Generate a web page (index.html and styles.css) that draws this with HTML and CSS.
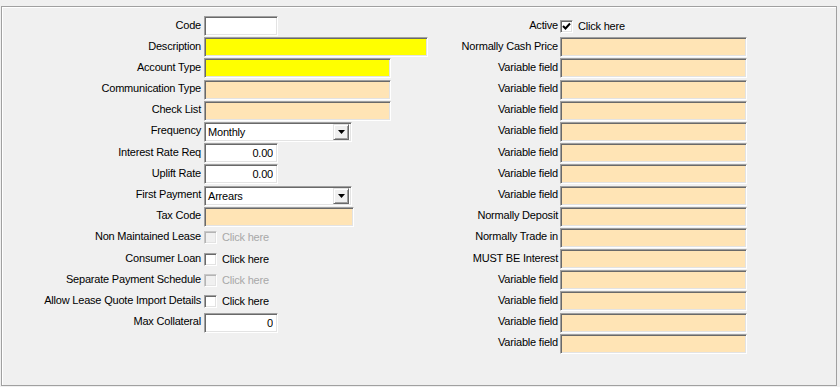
FILE: index.html
```html
<!DOCTYPE html>
<html lang="en">
<head>
    <meta charset="UTF-8">
    <title>Account Type</title>

    <link rel="stylesheet" href="styles.css">
</head>
<body>

<div class="panel">
    <!-- left column -->
    <div class="form form--left">
        <span class="form__label">Code</span>
        <input class="field field--short" type="text">

        <span class="form__label">Description</span>
        <input class="field field--wide field--required" type="text">

        <span class="form__label">Account Type</span>
        <input class="field field--mid field--required" type="text">

        <span class="form__label">Communication Type</span>
        <input class="field field--mid field--lookup" type="text">

        <span class="form__label">Check List</span>
        <input class="field field--mid field--lookup" type="text">

        <span class="form__label">Frequency</span>
        <div class="combo">
            <span class="combo__text">Monthly</span>
            <span class="combo__btn">
                <svg width="7" height="4" viewBox="0 0 7 4"><path d="M0 0h7L3.5 4z"/></svg>
            </span>
        </div>

        <span class="form__label">Interest Rate Req</span>
        <input class="field field--short field--num" type="text" value="0.00">

        <span class="form__label">Uplift Rate</span>
        <input class="field field--short field--num" type="text" value="0.00">

        <span class="form__label">First Payment</span>
        <div class="combo">
            <span class="combo__text">Arrears</span>
            <span class="combo__btn">
                <svg width="7" height="4" viewBox="0 0 7 4"><path d="M0 0h7L3.5 4z"/></svg>
            </span>
        </div>

        <span class="form__label">Tax Code</span>
        <input class="field field--tax field--lookup" type="text">

        <span class="form__label">Non Maintained Lease</span>
        <label class="check check--disabled"><span class="check__box"></span>Click here</label>

        <span class="form__label">Consumer Loan</span>
        <label class="check"><span class="check__box"></span>Click here</label>

        <span class="form__label">Separate Payment Schedule</span>
        <label class="check check--disabled"><span class="check__box"></span>Click here</label>

        <span class="form__label">Allow Lease Quote Import Details</span>
        <label class="check"><span class="check__box"></span>Click here</label>

        <span class="form__label">Max Collateral</span>
        <input class="field field--short field--num" type="text" value="0">
    </div>

    <!-- right column -->
    <div class="form form--right">
        <span class="form__label">Active</span>
        <label class="check">
            <span class="check__box">
                <svg width="9" height="9" viewBox="0 0 9 9"><path d="M1 4l2.5 2.5L8 1.5" fill="none" stroke="#000" stroke-width="2"/></svg>
            </span>Click here
        </label>

        <span class="form__label">Normally Cash Price</span>
        <input class="field field--mid field--lookup" type="text">

        <span class="form__label">Variable field</span>
        <input class="field field--mid field--lookup" type="text">
        <span class="form__label">Variable field</span>
        <input class="field field--mid field--lookup" type="text">
        <span class="form__label">Variable field</span>
        <input class="field field--mid field--lookup" type="text">
        <span class="form__label">Variable field</span>
        <input class="field field--mid field--lookup" type="text">
        <span class="form__label">Variable field</span>
        <input class="field field--mid field--lookup" type="text">
        <span class="form__label">Variable field</span>
        <input class="field field--mid field--lookup" type="text">
        <span class="form__label">Variable field</span>
        <input class="field field--mid field--lookup" type="text">

        <span class="form__label">Normally Deposit</span>
        <input class="field field--mid field--lookup" type="text">

        <span class="form__label">Normally Trade in</span>
        <input class="field field--mid field--lookup" type="text">

        <span class="form__label">MUST BE Interest</span>
        <input class="field field--mid field--lookup" type="text">

        <span class="form__label">Variable field</span>
        <input class="field field--mid field--lookup" type="text">
        <span class="form__label">Variable field</span>
        <input class="field field--mid field--lookup" type="text">
        <span class="form__label">Variable field</span>
        <input class="field field--mid field--lookup" type="text">
        <span class="form__label">Variable field</span>
        <input class="field field--mid field--lookup" type="text">
    </div>
</div>

</body>
</html>
```

FILE: styles.css
```css
* {
    border: 0;
    box-sizing: border-box;
    margin: 0;
    padding: 0;
}

:root {
    --bg: #f0f0f0;
    --edge: #a0a0a0;
    --edge-dark: #696969;
    --edge-light: #e3e3e3;
    --yellow: #ffff00;
    --peach: #ffe4b5;
}

body,
input {
    font: 11px/1 "Liberation Sans", Arial, sans-serif;
    letter-spacing: -0.2px;
    color: #000;
}

body {
    background-color: var(--bg);
    height: 100vh;
    padding-top: 6px;
    padding-left: 1px;
}

/* group box */
.panel {
    background-color: var(--bg);
    border: 1px solid var(--edge);
    box-shadow: inset 1px 1px #fff;
    display: flex;
    gap: 13px;
    width: 836px;
    height: 380px;
    padding-top: 9px;
}

.form {
    display: grid;
    grid-auto-rows: 20px;
    row-gap: 1.2px;
    align-items: center;
    align-content: start;
}

.form--left {
    grid-template-columns: 199px 224px;
    column-gap: 3px;
}

.form--right {
    grid-template-columns: 117px 187px;
    column-gap: 2px;
}

.form__label {
    text-align: right;
    white-space: nowrap;
    padding-bottom: 2px;
}

/* sunken edit box */
.field,
.combo {
    background-color: #fff;
    border: 1px solid;
    border-color: var(--edge) #fff #fff var(--edge);
    box-shadow: inset 1px 1px var(--edge-dark), inset -1px -1px var(--edge-light);
    display: block;
    height: 20px;
    outline: none;
    padding: 0 4px;
    -webkit-appearance: none;
    appearance: none;
}

.field--short { width: 74px; }
.field--mid { width: 187px; }
.field--wide { width: 224px; }
.field--tax { width: 150px; }

.field--num { text-align: right; }
.field--required { background-color: var(--yellow); }
.field--lookup { background-color: var(--peach); }

/* drop-down */
.combo {
    display: flex;
    align-items: center;
    justify-content: space-between;
    width: 148px;
    padding: 2px 2px 2px 3px;
}

.combo__text {
    padding-top: 1px;
}

.combo__btn {
    background-color: var(--bg);
    border: 1px solid;
    border-color: var(--edge-light) var(--edge-dark) var(--edge-dark) var(--edge-light);
    box-shadow: inset 1px 1px #fff, inset -1px -1px var(--edge);
    display: flex;
    align-items: center;
    justify-content: center;
    width: 16px;
    height: 16px;
}

/* checkbox */
.check {
    display: flex;
    align-items: center;
    gap: 5px;
    white-space: nowrap;
}

.check__box {
    background-color: #fff;
    border: 1px solid;
    border-color: var(--edge) #fff #fff var(--edge);
    box-shadow: inset 1px 1px var(--edge-dark), inset -1px -1px var(--edge-light);
    display: flex;
    align-items: center;
    justify-content: center;
    width: 13px;
    height: 13px;
}

.check--disabled {
    color: #a8a8a8;
}

.check--disabled .check__box {
    background-color: var(--bg);
    border-color: #c8c8c8 #fff #fff #c8c8c8;
    box-shadow: inset 1px 1px #b4b4b4, inset -1px -1px var(--edge-light);
}
```
